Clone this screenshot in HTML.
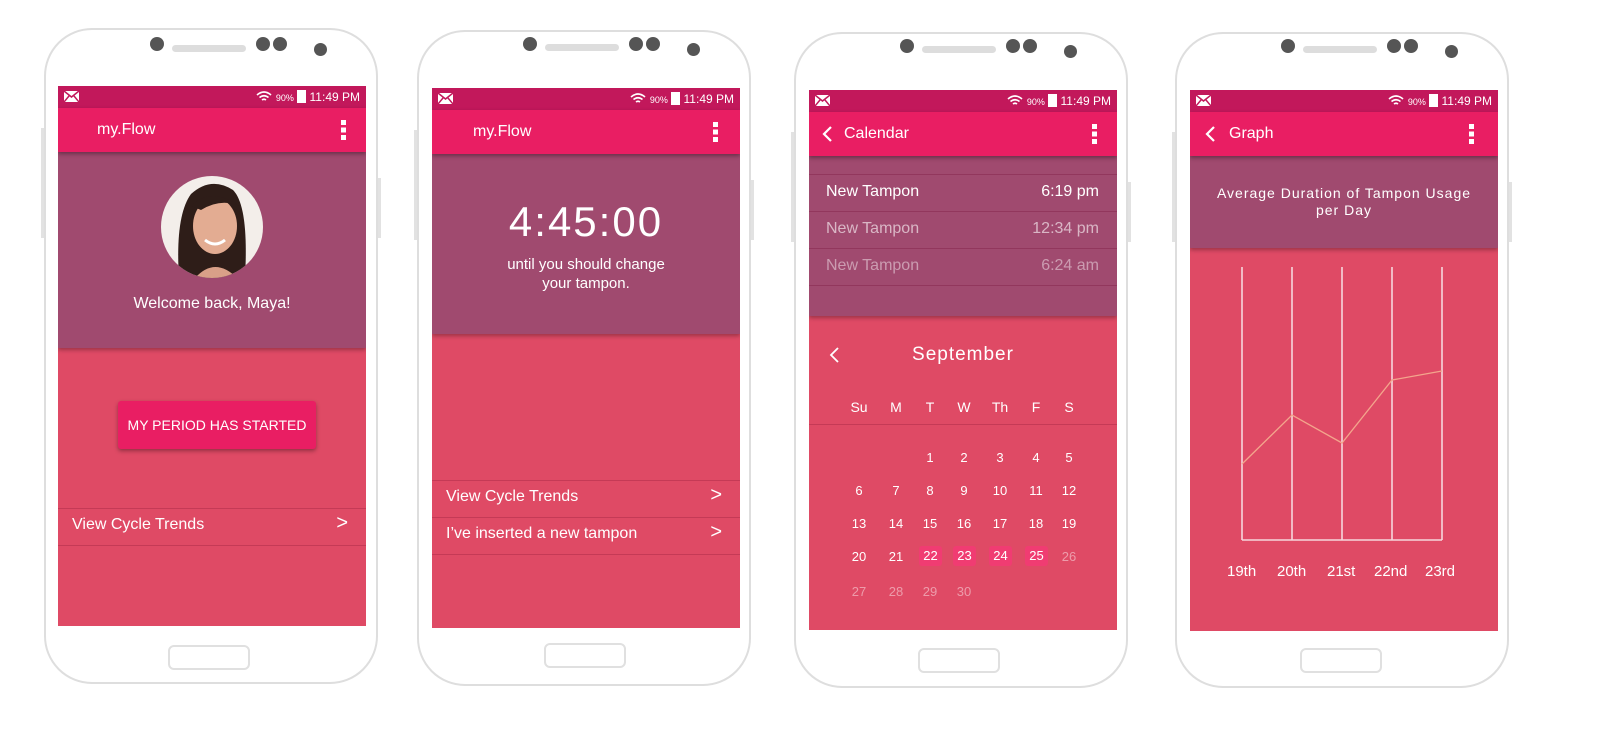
<!DOCTYPE html>
<html><head><meta charset="utf-8"><style>
*{margin:0;padding:0;box-sizing:border-box}
body{width:1617px;height:734px;background:#fff;position:relative;overflow:hidden;font-family:"Liberation Sans",sans-serif;color:#fff}
.a{position:absolute}
.phone{position:absolute;width:334px;height:656px;border:2px solid #dedede;border-radius:48px;background:#fff}
.btnl{position:absolute;left:-5px;top:98px;width:3px;height:110px;background:#e2e2e2}
.btnr{position:absolute;right:-5px;top:148px;width:3px;height:60px;background:#e2e2e2}
.dot{position:absolute;width:14px;height:14px;border-radius:50%;background:#555}
.spk{position:absolute;width:74px;height:7px;border-radius:4px;background:#ddd}
.home{position:absolute;width:82px;height:25px;border:2px solid #e0e0e0;border-radius:6px}
.scr{position:absolute;width:308px;height:540px;background:#df4a65;overflow:hidden}
.sb{position:absolute;left:0;top:0;width:308px;height:22px;background:#c2185b;font-size:12px}
.ab{position:absolute;left:0;top:22px;width:308px;height:44px;background:#e91e63;box-shadow:0 2px 4px rgba(0,0,0,.35);z-index:2;font-size:16px}
.pur{position:absolute;left:0;top:66px;width:308px;background:#a04a6f;box-shadow:0 2px 4px rgba(0,0,0,.3)}
.ln{position:absolute;left:0;width:308px;height:1px;background:rgba(150,30,60,.35)}
.row{position:absolute;left:14px;right:18px;font-size:16px}
.row span{position:absolute;right:0}
.c{position:absolute;width:30px;margin-left:-15px;text-align:center;font-size:13px}
</style></head><body>

<div class="phone" style="left:44px;top:28px"><div class="btnl"></div><div class="btnr"></div>
<div class="dot" style="left:104px;top:7px"></div><div class="spk" style="left:126px;top:15px"></div>
<div class="dot" style="left:210px;top:7px"></div><div class="dot" style="left:227px;top:7px"></div>
<div class="dot" style="left:268px;top:13px;width:13px;height:13px"></div>
<div class="home" style="left:122px;top:615px"></div></div>

<div class="phone" style="left:417px;top:30px"><div class="btnl"></div><div class="btnr"></div>
<div class="dot" style="left:104px;top:5px"></div><div class="spk" style="left:126px;top:12px"></div>
<div class="dot" style="left:210px;top:5px"></div><div class="dot" style="left:227px;top:5px"></div>
<div class="dot" style="left:268px;top:11px;width:13px;height:13px"></div>
<div class="home" style="left:125px;top:611px"></div></div>

<div class="phone" style="left:794px;top:32px"><div class="btnl"></div><div class="btnr"></div>
<div class="dot" style="left:104px;top:5px"></div><div class="spk" style="left:126px;top:12px"></div>
<div class="dot" style="left:210px;top:5px"></div><div class="dot" style="left:227px;top:5px"></div>
<div class="dot" style="left:268px;top:11px;width:13px;height:13px"></div>
<div class="home" style="left:122px;top:614px"></div></div>

<div class="phone" style="left:1175px;top:32px"><div class="btnl"></div><div class="btnr"></div>
<div class="dot" style="left:104px;top:5px"></div><div class="spk" style="left:126px;top:12px"></div>
<div class="dot" style="left:210px;top:5px"></div><div class="dot" style="left:227px;top:5px"></div>
<div class="dot" style="left:268px;top:11px;width:13px;height:13px"></div>
<div class="home" style="left:123px;top:614px"></div></div>

<!-- screen 1 -->
<div class="scr" style="left:58px;top:86px">
 <div class="sb"><div class="a" style="left:6px;top:5px;width:15px;height:11px;background:#fff"><svg width="15" height="11"><path d="M0 0L7.5 6L15 0M0 11L5 5M15 11L10 5" stroke="#c2185b" stroke-width="1.5" fill="none"/></svg></div>
 <div class="a" style="right:6px;top:4px;font-size:12px"><svg width="16" height="11" style="vertical-align:-1px"><path d="M1 4Q8 -2 15 4M3.5 6.5Q8 3 12.5 6.5M6 9Q8 7.5 10 9" stroke="#fff" stroke-width="1.6" fill="none"/></svg> <span style="font-size:9px">90%</span> <span style="display:inline-block;width:9px;height:13px;background:#fff;vertical-align:-2px"></span> 11:49 PM</div></div>
 <div class="ab"><div class="a" style="left:39px;top:13px">my.Flow</div><div class="a" style="right:20px;top:12px;width:5px;height:20px;background:linear-gradient(#fff 0 5px,transparent 5px 7.5px,#fff 7.5px 12.5px,transparent 12.5px 15px,#fff 15px)"></div></div>
 <div class="pur" style="height:196px"></div>
 <svg class="a" style="left:103px;top:90px" width="102" height="102">
  <defs><clipPath id="cp"><circle cx="51" cy="51" r="51"/></clipPath></defs>
  <g clip-path="url(#cp)">
   <rect width="102" height="102" fill="#f3eeea"/>
   <path d="M18 102 Q14 40 30 18 Q50 0 72 14 Q88 30 84 102Z" fill="#2e1d18"/>
   <ellipse cx="54" cy="50" rx="22" ry="28" fill="#e3ac92"/>
   <path d="M30 30 Q50 10 78 30 Q60 22 40 34Z" fill="#2e1d18"/>
   <path d="M44 64 Q54 72 64 64" stroke="#fff" stroke-width="3" fill="none"/>
   <path d="M34 102 Q54 80 76 102Z" fill="#d9a088"/>
  </g>
 </svg>
 <div class="a" style="left:0;width:308px;top:209px;text-align:center;font-size:16px">Welcome back, Maya!</div>
 <div class="a" style="left:60px;top:315px;width:198px;height:48px;background:#e91e63;border-radius:3px;box-shadow:0 2px 4px rgba(0,0,0,.35);text-align:center;line-height:48px;font-size:14px">MY PERIOD HAS STARTED</div>
 <div class="ln" style="top:422px"></div><div class="ln" style="top:459px"></div>
 <div class="row" style="top:430px">View Cycle Trends<span style="font-size:20px;top:-4px">&gt;</span></div>
</div>

<!-- screen 2 -->
<div class="scr" style="left:432px;top:88px">
 <div class="sb"><div class="a" style="left:6px;top:5px;width:15px;height:11px;background:#fff"><svg width="15" height="11"><path d="M0 0L7.5 6L15 0M0 11L5 5M15 11L10 5" stroke="#c2185b" stroke-width="1.5" fill="none"/></svg></div>
 <div class="a" style="right:6px;top:4px"><svg width="16" height="11" style="vertical-align:-1px"><path d="M1 4Q8 -2 15 4M3.5 6.5Q8 3 12.5 6.5M6 9Q8 7.5 10 9" stroke="#fff" stroke-width="1.6" fill="none"/></svg> <span style="font-size:9px">90%</span> <span style="display:inline-block;width:9px;height:13px;background:#fff;vertical-align:-2px"></span> 11:49 PM</div></div>
 <div class="ab"><div class="a" style="left:41px;top:13px">my.Flow</div><div class="a" style="right:22px;top:12px;width:5px;height:20px;background:linear-gradient(#fff 0 5px,transparent 5px 7.5px,#fff 7.5px 12.5px,transparent 12.5px 15px,#fff 15px)"></div></div>
 <div class="pur" style="height:180px"></div>
 <div class="a" style="left:0;width:308px;top:110px;text-align:center;font-size:42px;letter-spacing:2px">4:45:00</div>
 <div class="a" style="left:0;width:308px;top:167px;text-align:center;font-size:15px;line-height:19px">until you should change<br>your tampon.</div>
 <div class="ln" style="top:392px"></div><div class="ln" style="top:429px"></div><div class="ln" style="top:466px"></div>
 <div class="row" style="top:400px">View Cycle Trends<span style="font-size:20px;top:-4px">&gt;</span></div>
 <div class="row" style="top:437px">I’ve inserted a new tampon<span style="font-size:20px;top:-4px">&gt;</span></div>
</div>

<!-- screen 3 -->
<div class="scr" style="left:809px;top:90px">
 <div class="sb"><div class="a" style="left:6px;top:5px;width:15px;height:11px;background:#fff"><svg width="15" height="11"><path d="M0 0L7.5 6L15 0M0 11L5 5M15 11L10 5" stroke="#c2185b" stroke-width="1.5" fill="none"/></svg></div>
 <div class="a" style="right:6px;top:4px"><svg width="16" height="11" style="vertical-align:-1px"><path d="M1 4Q8 -2 15 4M3.5 6.5Q8 3 12.5 6.5M6 9Q8 7.5 10 9" stroke="#fff" stroke-width="1.6" fill="none"/></svg> <span style="font-size:9px">90%</span> <span style="display:inline-block;width:9px;height:13px;background:#fff;vertical-align:-2px"></span> 11:49 PM</div></div>
 <div class="ab"><svg class="a" style="left:12px;top:13px" width="12" height="18"><path d="M10 2L3 9L10 16" stroke="#fff" stroke-width="2.2" fill="none"/></svg><div class="a" style="left:35px;top:13px">Calendar</div><div class="a" style="right:20px;top:12px;width:5px;height:20px;background:linear-gradient(#fff 0 5px,transparent 5px 7.5px,#fff 7.5px 12.5px,transparent 12.5px 15px,#fff 15px)"></div></div>
 <div class="pur" style="height:160px"></div>
 <div class="ln" style="top:84px;background:rgba(120,20,60,.35)"></div><div class="ln" style="top:121px;background:rgba(120,20,60,.35)"></div><div class="ln" style="top:158px;background:rgba(120,20,60,.35)"></div><div class="ln" style="top:195px;background:rgba(120,20,60,.35)"></div>
 <div class="row" style="left:17px;top:93px">New Tampon<span>6:19 pm</span></div>
 <div class="row" style="left:17px;top:130px;color:rgba(255,255,255,.6)">New Tampon<span>12:34 pm</span></div>
 <div class="row" style="left:17px;top:167px;color:rgba(255,255,255,.45)">New Tampon<span>6:24 am</span></div>
 <svg class="a" style="left:19px;top:257px" width="12" height="16"><path d="M10 1L3 8L10 15" stroke="#fff" stroke-width="1.8" fill="none"/></svg>
 <div class="a" style="left:0;width:308px;top:254px;text-align:center;font-size:19px;letter-spacing:1px">September</div>
 <div class="ln" style="top:334px"></div>
 <div style="position:absolute;left:0;top:0;width:308px;height:540px;font-size:14px">
 <div class="c" style="left:50px;top:309px;font-size:14px">Su</div><div class="c" style="left:87px;top:309px;font-size:14px">M</div><div class="c" style="left:121px;top:309px;font-size:14px">T</div><div class="c" style="left:155px;top:309px;font-size:14px">W</div><div class="c" style="left:191px;top:309px;font-size:14px">Th</div><div class="c" style="left:227px;top:309px;font-size:14px">F</div><div class="c" style="left:260px;top:309px;font-size:14px">S</div>
 <div class="c" style="left:121px;top:360px">1</div><div class="c" style="left:155px;top:360px">2</div><div class="c" style="left:191px;top:360px">3</div><div class="c" style="left:227px;top:360px">4</div><div class="c" style="left:260px;top:360px">5</div>
 <div class="c" style="left:50px;top:393px">6</div><div class="c" style="left:87px;top:393px">7</div><div class="c" style="left:121px;top:393px">8</div><div class="c" style="left:155px;top:393px">9</div><div class="c" style="left:191px;top:393px">10</div><div class="c" style="left:227px;top:393px">11</div><div class="c" style="left:260px;top:393px">12</div>
 <div class="c" style="left:50px;top:426px">13</div><div class="c" style="left:87px;top:426px">14</div><div class="c" style="left:121px;top:426px">15</div><div class="c" style="left:155px;top:426px">16</div><div class="c" style="left:191px;top:426px">17</div><div class="c" style="left:227px;top:426px">18</div><div class="c" style="left:260px;top:426px">19</div>
 <div class="c" style="left:50px;top:459px">20</div><div class="c" style="left:87px;top:459px">21</div>
 <div class="c" style="left:121px;top:456px;width:23px;margin-left:-11px;height:20px;line-height:20px;background:#f03c72;border-radius:3px">22</div>
 <div class="c" style="left:155px;top:456px;width:23px;margin-left:-11px;height:20px;line-height:20px;background:#f03c72;border-radius:3px">23</div>
 <div class="c" style="left:191px;top:456px;width:23px;margin-left:-11px;height:20px;line-height:20px;background:#f03c72;border-radius:3px">24</div>
 <div class="c" style="left:227px;top:456px;width:23px;margin-left:-11px;height:20px;line-height:20px;background:#f03c72;border-radius:3px">25</div>
 <div class="c" style="left:260px;top:459px;color:rgba(255,255,255,.45)">26</div>
 <div class="c" style="left:50px;top:494px;color:rgba(255,255,255,.45)">27</div><div class="c" style="left:87px;top:494px;color:rgba(255,255,255,.45)">28</div><div class="c" style="left:121px;top:494px;color:rgba(255,255,255,.45)">29</div><div class="c" style="left:155px;top:494px;color:rgba(255,255,255,.45)">30</div>
 </div>
</div>

<!-- screen 4 -->
<div class="scr" style="left:1190px;top:90px;height:541px">
 <div class="sb"><div class="a" style="left:6px;top:5px;width:15px;height:11px;background:#fff"><svg width="15" height="11"><path d="M0 0L7.5 6L15 0M0 11L5 5M15 11L10 5" stroke="#c2185b" stroke-width="1.5" fill="none"/></svg></div>
 <div class="a" style="right:6px;top:4px"><svg width="16" height="11" style="vertical-align:-1px"><path d="M1 4Q8 -2 15 4M3.5 6.5Q8 3 12.5 6.5M6 9Q8 7.5 10 9" stroke="#fff" stroke-width="1.6" fill="none"/></svg> <span style="font-size:9px">90%</span> <span style="display:inline-block;width:9px;height:13px;background:#fff;vertical-align:-2px"></span> 11:49 PM</div></div>
 <div class="ab"><svg class="a" style="left:14px;top:13px" width="12" height="18"><path d="M10 2L3 9L10 16" stroke="#fff" stroke-width="2.2" fill="none"/></svg><div class="a" style="left:39px;top:13px">Graph</div><div class="a" style="right:24px;top:12px;width:5px;height:20px;background:linear-gradient(#fff 0 5px,transparent 5px 7.5px,#fff 7.5px 12.5px,transparent 12.5px 15px,#fff 15px)"></div></div>
 <div class="pur" style="height:92px"></div>
 <div class="a" style="left:0;width:308px;top:95px;text-align:center;font-size:14px;line-height:17px;letter-spacing:1px">Average Duration of Tampon Usage<br>per Day</div>
 <svg class="a" style="left:0;top:0" width="308" height="541">
  <g stroke="#f6d6dc" stroke-width="1.6"><line x1="52" y1="177" x2="52" y2="450"/><line x1="102" y1="177" x2="102" y2="450"/><line x1="152" y1="177" x2="152" y2="450"/><line x1="202" y1="177" x2="202" y2="450"/><line x1="252" y1="177" x2="252" y2="450"/><line x1="52" y1="450" x2="252" y2="450"/></g>
  <polyline points="52,374 102,325 152,353 202,290 252,281" fill="none" stroke="#f3a58c" stroke-width="1.3"/>
 </svg>
 <div class="a" style="top:473px;left:0;width:308px;font-size:15px"><span class="a" style="left:37px">19th</span><span class="a" style="left:87px">20th</span><span class="a" style="left:137px">21st</span><span class="a" style="left:184px">22nd</span><span class="a" style="left:235px">23rd</span></div>
</div>
</body></html>
